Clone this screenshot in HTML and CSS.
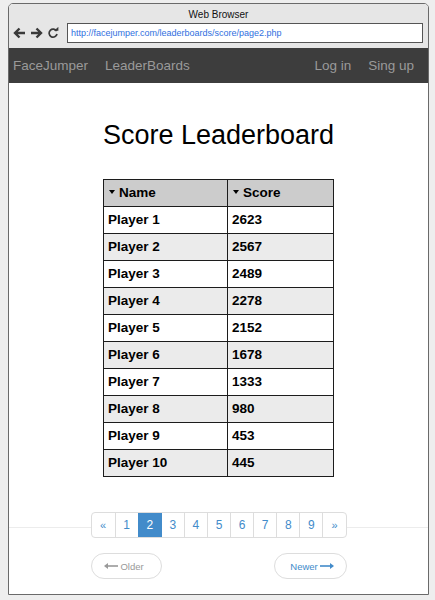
FILE: index.html
```html
<!DOCTYPE html>
<html>
<head>
<meta charset="utf-8">
<title>Score Leaderboard</title>
<link rel="stylesheet" href="styles.css">
</head>
<body>
<div class="window">
  <div class="topbar">
    <div class="wtitle">Web Browser</div>
    <div class="urlrow">
      <div class="icons">
        <svg class="ico" width="13" height="12" viewBox="0 0 13 12"><path d="M12 6H2M6.5 1.5L2 6l4.5 4.5" fill="none" stroke="#3a3a3a" stroke-width="2.4"/></svg>
        <svg class="ico" width="13" height="12" viewBox="0 0 13 12"><path d="M1 6h10M6.5 1.5L11 6l-4.5 4.5" fill="none" stroke="#3a3a3a" stroke-width="2.4"/></svg>
        <svg class="ico" width="12" height="12" viewBox="0 0 12 12"><path d="M9.6 4.2A4 4 0 1 0 10 7" fill="none" stroke="#3a3a3a" stroke-width="1.7"/><path d="M7 3.8h4.4V-0.2z" fill="#3a3a3a"/></svg>
      </div>
      <div class="url">http://facejumper.com/leaderboards/score/page2.php</div>
    </div>
  </div>
  <div class="navbar">
    <div class="navgroup">
      <span class="nlink brand">FaceJumper</span>
      <span class="nlink">LeaderBoards</span>
    </div>
    <div class="navgroup right">
      <span class="nlink">Log in</span>
      <span class="nlink">Sing up</span>
    </div>
  </div>
  <div class="content">
    <h1 class="title">Score Leaderboard</h1>
    <table class="board">
      <thead>
        <tr><th class="c1"><span class="sort">Name</span></th><th class="c2"><span class="sort">Score</span></th></tr>
      </thead>
      <tbody>
        <tr><td>Player 1</td><td>2623</td></tr>
        <tr><td>Player 2</td><td>2567</td></tr>
        <tr><td>Player 3</td><td>2489</td></tr>
        <tr><td>Player 4</td><td>2278</td></tr>
        <tr><td>Player 5</td><td>2152</td></tr>
        <tr><td>Player 6</td><td>1678</td></tr>
        <tr><td>Player 7</td><td>1333</td></tr>
        <tr><td>Player 8</td><td>980</td></tr>
        <tr><td>Player 9</td><td>453</td></tr>
        <tr><td>Player 10</td><td>445</td></tr>
      </tbody>
    </table>
    <div class="pagerrow">
      <div class="pagination">
        <span class="pg first sm">&laquo;</span>
        <span class="pg">1</span>
        <span class="pg active">2</span>
        <span class="pg">3</span>
        <span class="pg">4</span>
        <span class="pg">5</span>
        <span class="pg">6</span>
        <span class="pg">7</span>
        <span class="pg">8</span>
        <span class="pg">9</span>
        <span class="pg last sm">&raquo;</span>
      </div>
    </div>
    <div class="pager">
      <span class="pbtn older"><svg width="14" height="6" viewBox="0 0 14 6"><path d="M14 3H3" stroke="#999" stroke-width="1.6"/><path d="M0 3l4-3v6z" fill="#999"/></svg>Older</span>
      <span class="pbtn newer">Newer<svg width="14" height="6" viewBox="0 0 14 6"><path d="M0 3h11" stroke="#428bca" stroke-width="1.6"/><path d="M14 3l-4-3v6z" fill="#428bca"/></svg></span>
    </div>
  </div>
</div>
</body>
</html>
```

FILE: styles.css
```css
html, body {
  margin: 0;
  padding: 0;
}
body {
  background: #eeeeee;
  font-family: "Liberation Sans", Arial, sans-serif;
}
.window {
  margin: 3px 0 0 8px;
  width: 419px;
  height: 590px;
  border: 1px solid #6a6a6a;
  border-radius: 5px 5px 0 0;
  background: #ffffff;
  overflow: hidden;
}
.topbar {
  height: 44px;
  background: #e6e6e6;
}
.wtitle {
  height: 19px;
  line-height: 22px;
  font-size: 10px;
  color: #111;
  text-align: center;
}
.urlrow {
  display: flex;
  height: 20px;
  align-items: center;
}
.icons {
  width: 58px;
  display: flex;
  align-items: center;
  padding-left: 4px;
  box-sizing: border-box;
  gap: 4px;
}
.ico {
  display: block;
}
.url {
  width: 356px;
  height: 20px;
  box-sizing: border-box;
  border: 1px solid #555;
  background: #fff;
  color: #2f6fe0;
  font-size: 9px;
  line-height: 18px;
  padding-left: 3px;
  white-space: nowrap;
}
.navbar {
  height: 35px;
  background: #3d3d3d;
  display: flex;
  justify-content: space-between;
  align-items: center;
}
.navgroup {
  display: flex;
  gap: 17px;
  padding-left: 4px;
}
.navgroup.right {
  padding-left: 0;
  padding-right: 14px;
}
.nlink {
  font-size: 13.5px;
  line-height: 35px;
  color: #9a9a9a;
}
.content {
  height: 511px;
}
.title {
  margin: 0;
  padding-top: 37px;
  font-size: 27px;
  line-height: 31px;
  font-weight: normal;
  text-align: center;
  color: #000;
}
.board {
  margin: 28px auto 0;
  border-collapse: collapse;
  font-size: 13.5px;
  font-weight: bold;
  color: #000;
}
.board th, .board td {
  border: 1px solid #1c1c1c;
  height: 26px;
  padding: 0 0 0 4px;
  box-sizing: border-box;
  text-align: left;
  line-height: 26px;
}
.board th.c1, .board td:first-child {
  width: 124px;
}
.board th.c2, .board td:last-child {
  width: 106px;
}
.board thead tr {
  background: #cccccc;
}
.board tbody tr:nth-child(even) {
  background: #ebebeb;
}
.board tbody tr:nth-child(odd) {
  background: #ffffff;
}
.sort::before {
  content: "";
  display: inline-block;
  border-left: 3px solid transparent;
  border-right: 3px solid transparent;
  border-top: 4px solid #000;
  margin: 0 4px 2px 1px;
  vertical-align: middle;
}
.pagerrow {
  margin-top: 35px;
  height: 26px;
  background: linear-gradient(#ececec, #ececec) 0 15px / 100% 1px no-repeat;
  display: flex;
  justify-content: center;
}
.pagination {
  display: grid;
  grid-template-columns: repeat(11, 1fr);
  width: 256px;
  height: 26px;
  box-sizing: border-box;
  border: 1px solid #dddddd;
  border-radius: 4px;
  background: #fff;
  overflow: hidden;
}
.pg {
  display: flex;
  align-items: center;
  justify-content: center;
  border-left: 1px solid #dddddd;
  color: #428bca;
  font-size: 12px;
}
.pg.first {
  border-left: 0;
}
.pg.sm {
  font-size: 11px;
}
.pg.active {
  background: #428bca;
  border-left-color: #428bca;
  color: #fff;
}
.pg.active + .pg {
  border-left-color: #428bca;
}
.pager {
  width: 256px;
  margin: 15px auto 0;
  display: flex;
  justify-content: space-between;
}
.pbtn {
  height: 26px;
  box-sizing: border-box;
  border: 1px solid #dddddd;
  border-radius: 13px;
  display: inline-flex;
  align-items: center;
  justify-content: center;
  font-size: 9.5px;
  gap: 2px;
}
.pbtn.older {
  width: 71px;
  color: #999;
  padding-right: 4px;
}
.pbtn.newer {
  width: 73px;
  color: #428bca;
  padding-left: 4px;
}
```
